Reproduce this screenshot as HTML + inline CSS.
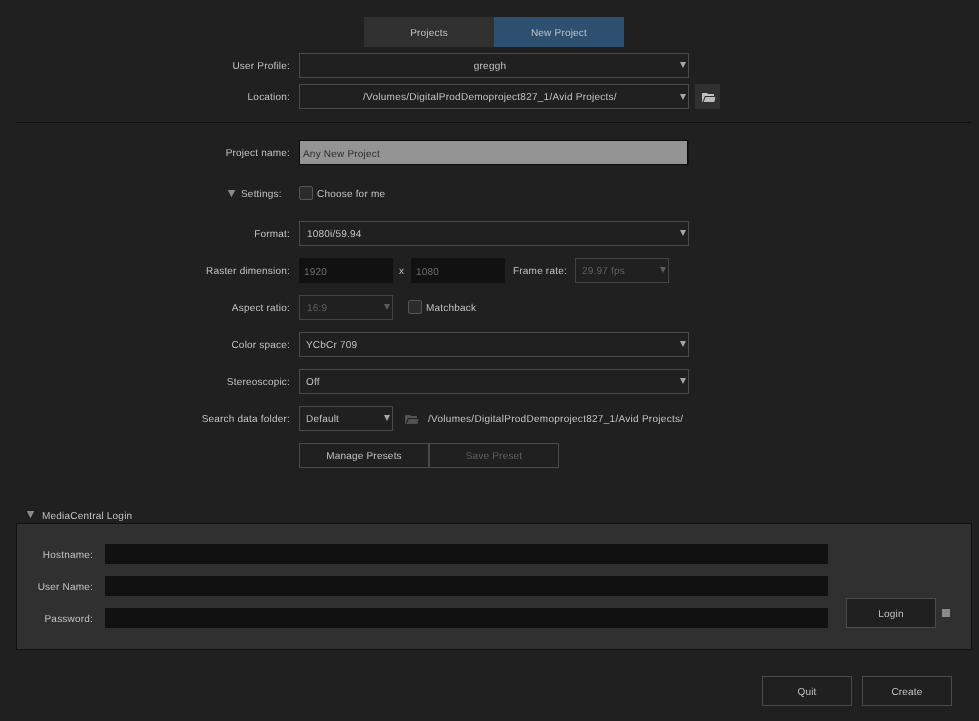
<!DOCTYPE html>
<html><head><meta charset="utf-8">
<style>
html,body{margin:0;padding:0;}
body{will-change:transform;text-rendering:geometricPrecision;width:979px;height:721px;background:#202020;position:relative;overflow:hidden;font-family:"Liberation Sans",sans-serif;font-size:10px;color:#c4c4c4;letter-spacing:0.2px;}
.a{position:absolute;box-sizing:border-box;}
.lbl{position:absolute;white-space:nowrap;text-align:right;line-height:27px;height:25px;}
.box{position:absolute;box-sizing:border-box;border:1px solid #4a4a4a;height:25px;line-height:25px;white-space:nowrap;}
.tri{position:absolute;width:0;height:0;border-left:3.5px solid transparent;border-right:3.5px solid transparent;border-top:6px solid #a8a8a8;}
.dis{color:#606060;}
.btn{position:absolute;box-sizing:border-box;border:1px solid #4a4a4a;text-align:center;white-space:nowrap;}
.fld{position:absolute;background:#111;}
</style></head><body>

<!-- tabs -->
<div class="a" style="left:364px;top:17px;width:130px;height:30px;background:#303030;line-height:34px;text-align:center;">Projects</div>
<div class="a" style="left:494px;top:17px;width:130px;height:30px;background:#2e5070;line-height:34px;text-align:center;">New Project</div>

<!-- user profile -->
<div class="lbl" style="right:689px;top:53px;">User Profile:</div>
<div class="box" style="left:299px;top:53px;width:390px;text-align:center;padding-right:8px;">greggh</div>
<div class="tri" style="left:680px;top:62px;"></div>

<div class="lbl" style="right:689px;top:84px;">Location:</div>
<div class="box" style="left:299px;top:84px;width:390px;text-align:center;padding-right:8px;letter-spacing:0.25px;">/Volumes/DigitalProdDemoproject827_1/Avid Projects/</div>
<div class="tri" style="left:680px;top:94px;"></div>
<div class="a" style="left:695px;top:84px;width:25px;height:25px;background:#303030;"></div>
<svg class="a" style="left:701px;top:92px;" width="16" height="12" viewBox="0 0 16 12"><path d="M1,10 V1.8 Q1,1 1.8,1 H6 L7,2 H12.2 Q13,2 13,2.8 V4.5 H4 L2.2,10 Z" fill="#c2c2c2"/><path d="M4.5,5 H14.4 L13.4,10 H2.4 Z" fill="#bcbcbc"/><path d="M1.9,10.4 L4.1,4.5 H14" fill="none" stroke="#303030" stroke-width="1"/></svg>

<!-- separator -->
<div class="a" style="left:16px;top:122px;width:955px;height:1px;background:#0f0f0f;"></div>

<!-- project name -->
<div class="lbl" style="right:689px;top:140px;">Project name:</div>
<div class="a" style="left:299px;top:140px;width:389px;height:25px;border:1px solid #0b0b0b;box-shadow:1px 0 0 #151515;background:#949494;color:#2a2a2a;line-height:27px;padding-left:3px;">Any New Project</div>

<!-- settings -->
<svg class="a" style="left:227px;top:190px;" width="10" height="8"><polygon points="0.7,0 8.3,0 4.5,7.3" fill="#8a8a8a"/></svg>
<div class="lbl" style="left:241px;top:181px;text-align:left;">Settings:</div>
<div class="a" style="left:299px;top:186px;width:14px;height:14px;border:1px solid #555;border-radius:2px;background:#2c2c2c;"></div>
<div class="lbl" style="left:317px;top:181px;text-align:left;">Choose for me</div>

<!-- format -->
<div class="lbl" style="right:689px;top:221px;">Format:</div>
<div class="box" style="left:299px;top:221px;width:390px;padding-left:7px;">1080i/59.94</div>
<div class="tri" style="left:680px;top:230px;"></div>

<!-- raster -->
<div class="lbl" style="right:689px;top:258px;">Raster dimension:</div>
<div class="fld" style="color:#707070;left:299px;top:258px;width:94px;height:25px;line-height:29px;padding-left:5px;box-sizing:border-box;">1920</div>
<div class="lbl" style="left:399px;top:258px;text-align:left;">x</div>
<div class="fld" style="color:#707070;left:411px;top:258px;width:94px;height:25px;line-height:29px;padding-left:5px;box-sizing:border-box;">1080</div>
<div class="lbl" style="left:513px;top:258px;text-align:left;">Frame rate:</div>
<div class="box dis" style="left:575px;top:258px;width:94px;padding-left:6px;border-color:#444;">29.97 fps</div>
<div class="tri" style="left:660px;top:267px;border-top-color:#5c5c5c;"></div>

<!-- aspect -->
<div class="lbl" style="right:689px;top:295px;">Aspect ratio:</div>
<div class="box dis" style="left:299px;top:295px;width:94px;padding-left:7px;border-color:#444;">16:9</div>
<div class="tri" style="left:384px;top:304px;border-top-color:#5c5c5c;"></div>
<div class="a" style="left:408px;top:300px;width:14px;height:14px;border:1px solid #555;border-radius:2px;background:#2c2c2c;"></div>
<div class="lbl" style="left:426px;top:295px;text-align:left;">Matchback</div>

<!-- color space -->
<div class="lbl" style="right:689px;top:332px;">Color space:</div>
<div class="box" style="left:299px;top:332px;width:390px;padding-left:6px;">YCbCr 709</div>
<div class="tri" style="left:680px;top:341px;"></div>

<!-- stereo -->
<div class="lbl" style="right:689px;top:369px;">Stereoscopic:</div>
<div class="box" style="left:299px;top:369px;width:390px;padding-left:6px;">Off</div>
<div class="tri" style="left:680px;top:378px;"></div>

<!-- search data folder -->
<div class="lbl" style="right:689px;top:406px;">Search data folder:</div>
<div class="box" style="left:299px;top:406px;width:94px;padding-left:6px;">Default</div>
<div class="tri" style="left:384px;top:415px;"></div>
<svg class="a" style="left:404px;top:414px;" width="16" height="12" viewBox="0 0 16 12"><path d="M1,10 V1.8 Q1,1 1.8,1 H6 L7,2 H12.2 Q13,2 13,2.8 V4.5 H4 L2.2,10 Z" fill="#555"/><path d="M4.5,5 H14.4 L13.4,10 H2.4 Z" fill="#525252"/><path d="M1.9,10.4 L4.1,4.5 H14" fill="none" stroke="#202020" stroke-width="1"/></svg>
<div class="lbl" style="left:428px;top:406px;text-align:left;letter-spacing:0.28px;">/Volumes/DigitalProdDemoproject827_1/Avid Projects/</div>

<!-- presets -->
<div class="btn" style="left:299px;top:443px;width:130px;height:25px;line-height:25px;">Manage Presets</div>
<div class="btn dis" style="left:429px;top:443px;width:130px;height:25px;line-height:25px;">Save Preset</div>

<!-- MediaCentral -->
<svg class="a" style="left:26px;top:511px;" width="10" height="8"><polygon points="0.7,0 8.3,0 4.5,7.3" fill="#8a8a8a"/></svg>
<div class="lbl" style="left:42px;top:503px;text-align:left;">MediaCentral Login</div>
<div class="a" style="left:16px;top:523px;width:956px;height:127px;border:1px solid #111;background:#303030;"></div>
<div class="lbl" style="right:886px;top:542px;">Hostname:</div>
<div class="fld" style="left:105px;top:544px;width:723px;height:20px;"></div>
<div class="lbl" style="right:886px;top:574px;">User Name:</div>
<div class="fld" style="left:105px;top:576px;width:723px;height:20px;"></div>
<div class="lbl" style="right:886px;top:606px;">Password:</div>
<div class="fld" style="left:105px;top:608px;width:723px;height:20px;"></div>
<div class="btn" style="left:846px;top:598px;width:90px;height:30px;line-height:32px;background:#202020;">Login</div>
<div class="a" style="left:942px;top:609px;width:8px;height:8px;background:#8a8a8a;"></div>

<!-- bottom buttons -->
<div class="btn" style="left:762px;top:676px;width:90px;height:30px;line-height:32px;">Quit</div>
<div class="btn" style="left:862px;top:676px;width:90px;height:30px;line-height:32px;">Create</div>

</body></html>
